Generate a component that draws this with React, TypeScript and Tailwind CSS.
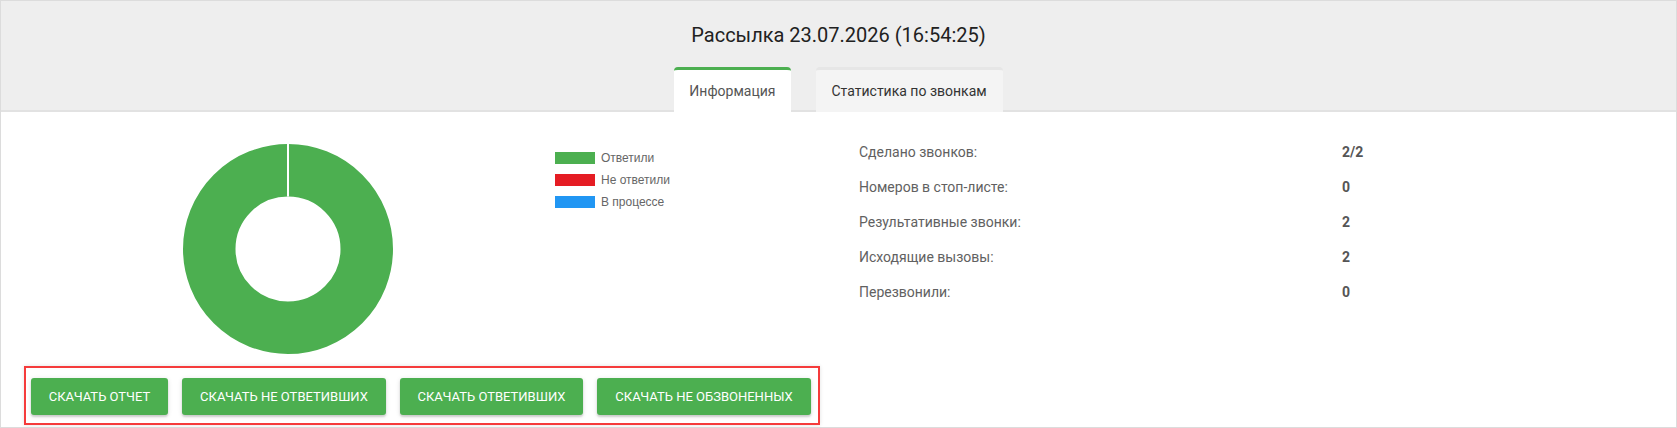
import React from "react";

const legend = [
  { label: "Ответили", color: "bg-[#4caf50]" },
  { label: "Не ответили", color: "bg-[#e51c23]" },
  { label: "В процессе", color: "bg-[#2196f3]" },
];

const stats = [
  { label: "Сделано звонков:", value: "2/2" },
  { label: "Номеров в стоп-листе:", value: "0" },
  { label: "Результативные звонки:", value: "2" },
  { label: "Исходящие вызовы:", value: "2" },
  { label: "Перезвонили:", value: "0" },
];

const downloads = [
  { title: "Скачать отчет", width: "w-[137px]" },
  { title: "Скачать не ответивших", width: "w-[204px]" },
  { title: "Скачать ответивших", width: "w-[183px]" },
  { title: "Скачать не обзвоненных", width: "w-[214px]" },
];

// Doughnut with a single 100% segment, white seam at 12 o'clock
const Donut = () => {
  const R = 105;
  const r = 52.5;
  const mid = (R + r) / 2;
  return (
    <svg width={210} height={210} viewBox="0 0 210 210" className="shrink-0">
      <circle cx={105} cy={105} r={mid} fill="none" stroke="#4caf50" strokeWidth={R - r} />
      <line x1={105} y1={0} x2={105} y2={105 - r} stroke="#fff" strokeWidth={2} />
    </svg>
  );
};

const App = () => {
  return (
    <div className="w-full bg-white font-['Roboto',sans-serif]">
      <div className="border border-[#dcdcdc] bg-white min-h-[428px]">
        {/* Header */}
        <div className="bg-[#eeeeee] border-b-2 border-[#e2e2e2]">
          <h1 className="pt-[20px] text-center text-[20px] leading-[28px] font-normal text-[#212121]">
            Рассылка 23.07.2026 (16:54:25)
          </h1>
          <div className="mt-[18px] -mb-[2px] flex justify-center gap-[25px]">
            <div className="h-[45px] px-[15px] flex items-center bg-white border-t-[3px] border-[#4caf50] rounded-t-[4px] text-[14px] text-[#555]">
              Информация
            </div>
            <div className="h-[45px] px-[16px] flex items-center bg-[#f4f4f4] border-t-[3px] border-[#e6e6e6] rounded-t-[4px] text-[14px] text-[#333]">
              Статистика по звонкам
            </div>
          </div>
        </div>

        {/* Body */}
        <div className="flex">
          <div className="w-[819px] pl-[23px] pt-[32px] flex flex-col">
            <div className="flex items-start">
              <div className="ml-[159px]">
                <Donut />
              </div>
              <div className="ml-[162px] mt-[3px] flex flex-col font-['Liberation_Sans',Arial,sans-serif] text-[12px] text-[#666]">
                {legend.map((item) => (
                  <div key={item.label} className="h-[22px] flex items-center gap-[6px]">
                    <span className={`w-[40px] h-[12px] ${item.color}`} />
                    <span>{item.label}</span>
                  </div>
                ))}
              </div>
            </div>

            <div className="mt-[12px] w-[796px] border-2 border-[#f53b3b] pl-[5px] pt-[10px] pb-[8px] flex gap-[14px] shadow-[0_0_4px_rgba(0,0,0,0.12)]">
              {downloads.map((btn) => (
                <button
                  key={btn.title}
                  className={`${btn.width} shrink-0 h-[37px] flex items-center justify-center whitespace-nowrap rounded-[3px] bg-[#4caf50] text-white text-[13px] uppercase shadow-[0_2px_2px_rgba(0,0,0,0.14),0_1px_5px_rgba(0,0,0,0.12)]`}
                >
                  {btn.title}
                </button>
              ))}
            </div>
          </div>

          <div className="ml-[39px] pt-[23px] text-[14px]">
            {stats.map((row) => (
              <div key={row.label} className="h-[35px] flex items-center">
                <span className="w-[483px] text-[#616161]">{row.label}</span>
                <span className="font-bold text-[#555]">{row.value}</span>
              </div>
            ))}
          </div>
        </div>
      </div>
    </div>
  );
};

export default App;
